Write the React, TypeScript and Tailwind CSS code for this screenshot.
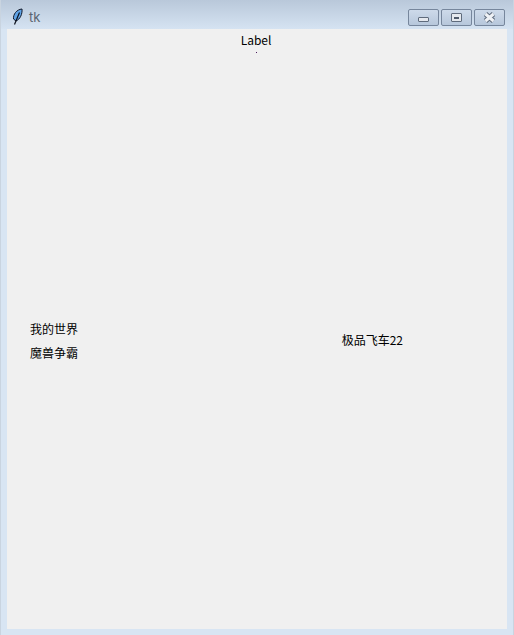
import React from "react";

const uiFont = { fontFamily: '"Noto Sans CJK SC", sans-serif' };

function Feather() {
  return (
    <svg width="12" height="20" viewBox="0 0 12 20" className="shrink-0">
      <path d="M2.5 14 C2 9.5 5.5 4.5 11 4 C11.5 9 9 14.5 5 16 Z" fill="#5fa3e6" stroke="#10182a" strokeWidth="1" />
      <path d="M8.5 7.5 L3.5 19.5" stroke="#0a0f1c" strokeWidth="1.2" fill="none" />
    </svg>
  );
}

function TitleButton({ children, w }: { children: React.ReactNode; w: string }) {
  return (
    <div className={`${w} h-[17px] flex items-center justify-center rounded-[2px] border border-[#76869c] bg-gradient-to-b from-[#cddaea] to-[#b7c7db]`}>
      {children}
    </div>
  );
}

export default function App() {
  return (
    <div className="w-[514px] h-[635px] flex flex-col bg-[#d8e5f3] border-x border-[#c9d4e0] overflow-hidden">
      {/* title bar */}
      <div className="h-[29px] shrink-0 flex items-center pl-[10px] pr-[8px] bg-gradient-to-b from-[#b9c8da] to-[#d5e3f2]">
        <Feather />
        <span className="ml-[6px] mt-[6px] text-[13px] leading-none text-[#5a6470] font-['Inter',sans-serif]">tk</span>
        <div className="ml-auto flex gap-[2px] mt-[6px]">
          <TitleButton w="w-[31px]">
            <div className="w-[11px] h-[5px] mt-[4px] bg-[#e4e8ee] border border-[#5f6b7c] rounded-[1px]" />
          </TitleButton>
          <TitleButton w="w-[31px]">
            <div className="w-[11px] h-[9px] bg-[#e4e8ee] border border-[#5f6b7c] rounded-[1px] flex items-center justify-center">
              <div className="w-[5px] h-[2px] bg-[#4e5a6b]" />
            </div>
          </TitleButton>
          <TitleButton w="w-[31px]">
            <svg width="13" height="11" viewBox="0 0 13 11">
              <path d="M2.5 2 L10.5 9 M10.5 2 L2.5 9" stroke="#5f6b7c" strokeWidth="5" />
              <path d="M2.5 2 L10.5 9 M10.5 2 L2.5 9" stroke="#eef1f5" strokeWidth="3" />
            </svg>
          </TitleButton>
        </div>
      </div>

      {/* client area */}
      <div className="ml-[6px] w-[500px] h-[600px] bg-[#f0f0f0] text-[12px] text-black flex flex-col" style={uiFont}>
        <div className="h-[21px] flex items-center justify-center pr-[2px] leading-none">Label</div>
        <div className="h-px w-px bg-[#4b1a5c] mt-[2px] ml-[249px]" />
        <div className="flex-1 flex items-center justify-between pl-[23px] pr-[104px] pb-[4px]">
          <div className="flex flex-col gap-[7px] mt-[2px] leading-[17px]">
            <span>我的世界</span>
            <span>魔兽争霸</span>
          </div>
          <span className="leading-[17px]">极品飞车22</span>
        </div>
      </div>
      <div className="flex-1 bg-[#d8e5f3]" />
    </div>
  );
}
